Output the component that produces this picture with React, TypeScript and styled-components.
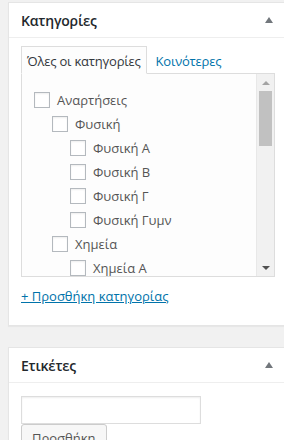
import styled, { createGlobalStyle } from 'styled-components';

const GlobalStyle = createGlobalStyle`
  html, body {
    margin: 0;
    padding: 0;
    background: #f1f1f1;
    overflow: hidden;
  }
  body {
    font-family: "Open Sans", "Liberation Sans", sans-serif;
    font-size: 13px;
    color: #444;
  }
`;

const Page = styled.div`
  display: flex;
  flex-direction: column;
  gap: 21px;
  padding: 2px 0 0 8px;
  width: 280px;
`;

const Postbox = styled.div`
  background: #fff;
  border: 1px solid #e5e5e5;
  box-shadow: 0 1px 1px rgba(0, 0, 0, 0.04);
`;

const Header = styled.div`
  display: flex;
  align-items: center;
  justify-content: space-between;
  height: 34px;
  padding: 0 0 0 12px;
  border-bottom: 1px solid #eee;
`;

const Title = styled.h2`
  margin: 0;
  font-size: 14px;
  font-weight: 600;
  letter-spacing: -0.2px;
  color: #23282d;
`;

const Toggle = styled.span`
  display: flex;
  align-items: center;
  justify-content: center;
  width: 36px;
  height: 34px;

  &::after {
    content: '';
    border-left: 4px solid transparent;
    border-right: 4px solid transparent;
    border-bottom: 6px solid #72777c;
  }
`;

const Inside = styled.div<{ $top: number }>`
  padding: ${({ $top }) => $top}px 12px 12px;
`;

const Tabs = styled.ul`
  display: flex;
  margin: 0 0 -1px;
  padding: 0;
  list-style: none;
`;

const Tab = styled.li<{ $active?: boolean }>`
  padding: 5px 5px 3px;
  line-height: 18px;
  letter-spacing: -0.2px;
  border: 1px solid ${({ $active }) => ($active ? '#ddd' : 'transparent')};
  border-bottom-color: ${({ $active }) => ($active ? '#fdfdfd' : 'transparent')};
  background: ${({ $active }) => ($active ? '#fdfdfd' : 'transparent')};
  color: ${({ $active }) => ($active ? '#32373c' : '#0073aa')};
  margin-right: 3px;
`;

const Panel = styled.div`
  display: flex;
  height: 202px;
  border: 1px solid #ddd;
  background: #fdfdfd;
`;

const ListArea = styled.div`
  flex: 1;
  overflow: hidden;
  padding: 14px 12px 0;
`;

const List = styled.ul<{ $nested?: boolean }>`
  margin: 0 0 0 ${({ $nested }) => ($nested ? '18px' : '0')};
  padding: 0;
  list-style: none;
`;

const Row = styled.label`
  display: flex;
  align-items: center;
  gap: 7px;
  height: 24px;
  color: #555;
  white-space: nowrap;
`;

const Box = styled.span`
  display: inline-block;
  width: 14px;
  height: 14px;
  border: 1px solid #b4b9be;
  background: #fff;
  box-shadow: inset 0 1px 2px rgba(0, 0, 0, 0.07);
`;

const Scrollbar = styled.div`
  display: flex;
  flex-direction: column;
  align-items: center;
  width: 17px;
  background: #f1f1f1;
  border-left: 1px solid #e8e8e8;
`;

const Arrow = styled.span<{ $down?: boolean }>`
  display: flex;
  align-items: center;
  justify-content: center;
  height: 17px;
  width: 100%;

  &::after {
    content: '';
    border-left: 4px solid transparent;
    border-right: 4px solid transparent;
    ${({ $down }) =>
      $down ? 'border-top: 4px solid #505050;' : 'border-bottom: 4px solid #a3a3a3;'}
  }
`;

const Spacer = styled.div`
  flex: 1;
  width: 100%;
  display: flex;
  justify-content: center;
`;

const Thumb = styled.div`
  width: 13px;
  height: 55px;
  background: #c1c1c1;
`;

const AddLink = styled.a`
  display: inline-block;
  margin-top: 10px;
  color: #0073aa;
  text-decoration: underline;
  font-size: 13px;
  line-height: 18px;
`;

const Footer = styled.div`
  height: 8px;
`;

const TagInput = styled.input`
  display: block;
  box-sizing: border-box;
  width: 180px;
  height: 28px;
  margin: 0;
  border: 1px solid #ddd;
  box-shadow: inset 0 1px 2px rgba(0, 0, 0, 0.07);
  background: #fff;
`;

const Button = styled.button`
  display: block;
  height: 28px;
  padding: 0 10px 1px;
  border: 1px solid #ccc;
  border-radius: 3px;
  background: #f7f7f7;
  box-shadow: 0 1px 0 #ccc;
  color: #555;
  font-family: inherit;
  font-size: 13px;
`;

type Cat = { name: string; children?: Cat[] };

const categories: Cat[] = [
  {
    name: 'Αναρτήσεις',
    children: [
      {
        name: 'Φυσική',
        children: [
          { name: 'Φυσική Α' },
          { name: 'Φυσική Β' },
          { name: 'Φυσική Γ' },
          { name: 'Φυσική Γυμν' },
        ],
      },
      {
        name: 'Χημεία',
        children: [{ name: 'Χημεία Α' }],
      },
    ],
  },
];

const CategoryList = ({ items, nested }: { items: Cat[]; nested?: boolean }) => (
  <List $nested={nested}>
    {items.map((c) => (
      <li key={c.name}>
        <Row>
          <Box />
          {c.name}
        </Row>
        {c.children && <CategoryList items={c.children} nested />}
      </li>
    ))}
  </List>
);

export default function App() {
  return (
    <>
      <GlobalStyle />
      <Page>
        <Postbox>
          <Header>
            <Title>Κατηγορίες</Title>
            <Toggle />
          </Header>
          <Inside $top={8}>
            <Tabs>
              <Tab $active>Όλες οι κατηγορίες</Tab>
              <Tab>Κοινότερες</Tab>
            </Tabs>
            <Panel>
              <ListArea>
                <CategoryList items={categories} />
              </ListArea>
              <Scrollbar>
                <Arrow />
                <Spacer>
                  <Thumb />
                </Spacer>
                <Arrow $down />
              </Scrollbar>
            </Panel>
            <AddLink href="#">+ Προσθήκη κατηγορίας</AddLink>
            <Footer />
          </Inside>
        </Postbox>
        <Postbox>
          <Header>
            <Title>Ετικέτες</Title>
            <Toggle />
          </Header>
          <Inside $top={13}>
            <TagInput />
            <Button>Προσθήκη</Button>
          </Inside>
        </Postbox>
      </Page>
    </>
  );
}
